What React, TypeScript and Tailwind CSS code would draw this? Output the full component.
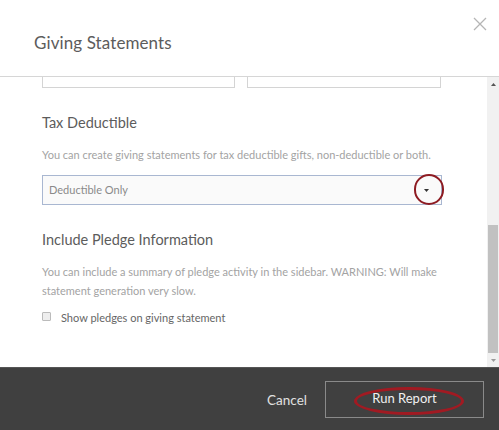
import React from "react";

export default function App() {
  return (
    <div
      className="w-[499px] h-[430px] flex flex-col bg-white overflow-hidden"
      style={{ fontFamily: "Lato, 'Open Sans', sans-serif" }}
    >
      {/* Header */}
      <div className="h-[77px] shrink-0 relative flex items-center border-b border-[#d6d6d6]">
        <div className="pl-[34px] pt-[10px] text-[17px] text-[#5c5c5c] tracking-[0.1px]">Giving Statements</div>
        <svg
          className="absolute right-[12px] top-[17px]"
          width="14"
          height="14"
          viewBox="0 0 14 14"
        >
          <path d="M1 1 L13 13 M13 1 L1 13" stroke="#b5b5b5" strokeWidth="1.3" fill="none" />
        </svg>
      </div>

      {/* Body */}
      <div className="flex-1 flex min-h-0">
        <div className="flex-1 relative pl-[42px] pr-[45px]">
          <div className="flex gap-[12px]">
            <div className="w-[193px] h-[11px] border-x border-b border-[#d4d4d4]" />
            <div className="w-[194px] h-[11px] border-x border-b border-[#d4d4d4]" />
          </div>

          <div className="mt-[25px] text-[14.5px] leading-[20px] text-[#5c5c5c]">Tax Deductible</div>
          <div className="mt-[12px] text-[11px] leading-[19px] text-[#a3a3a3] whitespace-nowrap">
            You can create giving statements for tax deductible gifts, non-deductible or both.
          </div>

          <div className="relative mt-[11px] h-[30px] w-[400px] border border-[#a9b7d1] bg-[#fafafa] flex items-center pl-[6px]">
            <span className="text-[11px] text-[#8a8a8a]">Deductible Only</span>
            <svg className="absolute right-[12px] top-[13px]" width="5" height="3" viewBox="0 0 5 3">
              <path d="M0 0 L5 0 L2.5 3 Z" fill="#333" />
            </svg>
            <div className="absolute right-[-3px] top-[-2px] w-[30px] h-[31px] rounded-full border-[2.5px] border-[#8e1b22]" />
          </div>

          <div className="mt-[25px] text-[14.5px] leading-[20px] text-[#5c5c5c]">Include Pledge Information</div>
          <div className="mt-[12px] text-[11px] leading-[19px] text-[#a3a3a3] w-[400px]">
            You can include a summary of pledge activity in the sidebar. WARNING: Will make statement generation very slow.
          </div>

          <div className="mt-[9px] flex items-center h-[19px]">
            <div className="w-[9px] h-[9px] border border-[#bbb] bg-[#eee] rounded-[1px] -mt-[4px]" />
            <span className="ml-[10px] text-[11px] text-[#666]">Show pledges on giving statement</span>
          </div>
        </div>

        {/* Scrollbar */}
        <div className="w-[12px] shrink-0 bg-[#f1f1f1] flex flex-col">
          <div className="h-[14px] flex items-center justify-center">
            <svg width="5" height="3" viewBox="0 0 5 3">
              <path d="M0 3 L5 3 L2.5 0 Z" fill="#555" />
            </svg>
          </div>
          <div className="flex-1 flex flex-col">
            <div className="h-[134px]" />
            <div className="flex-1 bg-[#c1c1c1] mx-[1px]" />
          </div>
          <div className="h-[14px] flex items-center justify-center">
            <svg width="5" height="3" viewBox="0 0 5 3">
              <path d="M0 0 L5 0 L2.5 3 Z" fill="#999" />
            </svg>
          </div>
        </div>
      </div>

      {/* Footer */}
      <div className="h-[63px] shrink-0 bg-[#404040] border-t border-[#555] flex items-center justify-end pr-[15px]">
        <span className="text-[13.5px] text-[#e0e0e0] mr-[18px] mt-[2px]">Cancel</span>
        <div className="relative w-[159px] h-[37px] border border-[#8a8a8a] flex items-center justify-center">
          <span className="text-[13px] text-[#f0f0f0]">Run Report</span>
          <div className="absolute left-[28px] top-[5px] w-[110px] h-[28px] rounded-[50%] border-[3px] border-[#a11a22]" />
        </div>
      </div>
    </div>
  );
}
